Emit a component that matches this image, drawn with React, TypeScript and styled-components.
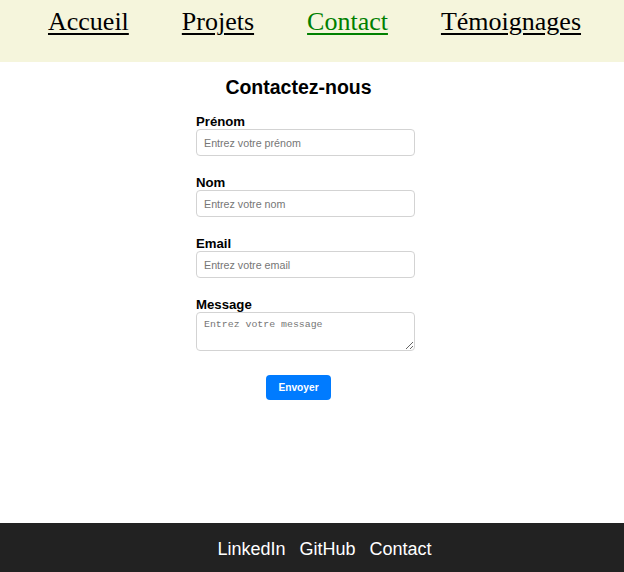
import React from "react";
import styled, { createGlobalStyle } from "styled-components";

const GlobalStyle = createGlobalStyle`
  html, body { margin: 0; padding: 0; }
  body { font-family: "Liberation Sans", Arial, sans-serif; background: #ffffff; color: #000; }
  * { box-sizing: border-box; }
`;

const Page = styled.div`
  min-height: 100vh;
  display: flex;
  flex-direction: column;
`;

const Header = styled.header`
  background: #f5f5dc;
  height: 62px;
  padding: 7px 0 0 5px;
`;

const NavList = styled.ul`
  list-style: none;
  margin: 0;
  padding: 0;
  display: flex;
  justify-content: center;
  gap: 53px;
`;

const NavLink = styled.a<{ $active?: boolean }>`
  font-family: "Liberation Serif", "Times New Roman", serif;
  font-size: 26px;
  line-height: 30px;
  color: ${(p) => (p.$active ? "#008000" : "#000000")};
  text-decoration: underline;
  text-decoration-thickness: 2px;
  text-underline-offset: 3px;
`;

const Main = styled.main`
  flex: 1;
  display: flex;
  flex-direction: column;
  align-items: center;
  padding-right: 27px;
`;

const Form = styled.form`
  width: 205px;
  display: flex;
  flex-direction: column;
`;

const Title = styled.h2`
  margin: 14px 0 16px;
  font-size: 19.5px;
  line-height: 22px;
  font-weight: bold;
  text-align: center;
`;

const Field = styled.div`
  display: flex;
  flex-direction: column;
  margin-bottom: 19px;
`;

const Label = styled.label`
  font-size: 13.2px;
  line-height: 15px;
  font-weight: bold;
`;

const Input = styled.input`
  width: 219px;
  height: 27px;
  padding: 0 7px;
  border: 1px solid #d3d3d3;
  border-radius: 4px;
  font-family: "Liberation Sans", Arial, sans-serif;
  font-size: 10.7px;
  color: #000;
  &::placeholder { color: #767676; }
`;

const TextArea = styled.textarea`
  width: 219px;
  height: 39px;
  padding: 6px 7px;
  border: 1px solid #d3d3d3;
  border-radius: 4px;
  font-family: "Liberation Mono", "Courier New", monospace;
  font-size: 9.9px;
  line-height: 12px;
  &::placeholder { color: #767676; }
`;

const Button = styled.button`
  align-self: center;
  margin-top: 5px;
  width: 65px;
  height: 25px;
  border: none;
  border-radius: 4px;
  background: #007bff;
  color: #ffffff;
  font-family: "Liberation Sans", Arial, sans-serif;
  font-size: 10.2px;
  font-weight: bold;
  cursor: pointer;
`;

const Footer = styled.footer`
  background: #222222;
  height: 49px;
  display: flex;
  align-items: center;
  justify-content: center;
  gap: 14px;
  padding: 3px 0 0 25px;
`;

const FooterLink = styled.a`
  color: #ffffff;
  font-size: 18px;
  line-height: 21px;
  text-decoration: none;
`;

export default function App() {
  const fields = [
    { id: "prenom", label: "Prénom", placeholder: "Entrez votre prénom", type: "text" },
    { id: "nom", label: "Nom", placeholder: "Entrez votre nom", type: "text" },
    { id: "email", label: "Email", placeholder: "Entrez votre email", type: "email" },
  ];
  return (
    <Page>
      <GlobalStyle />
      <Header>
        <nav>
          <NavList>
            <li><NavLink href="#">Accueil</NavLink></li>
            <li><NavLink href="#">Projets</NavLink></li>
            <li><NavLink href="#" $active>Contact</NavLink></li>
            <li><NavLink href="#">Témoignages</NavLink></li>
          </NavList>
        </nav>
      </Header>
      <Main>
        <Form onSubmit={(e) => e.preventDefault()}>
          <Title>Contactez-nous</Title>
          {fields.map((f) => (
            <Field key={f.id}>
              <Label htmlFor={f.id}>{f.label}</Label>
              <Input id={f.id} type={f.type} placeholder={f.placeholder} />
            </Field>
          ))}
          <Field>
            <Label htmlFor="message">Message</Label>
            <TextArea id="message" placeholder="Entrez votre message" />
          </Field>
          <Button type="submit">Envoyer</Button>
        </Form>
      </Main>
      <Footer>
        <FooterLink href="#">LinkedIn</FooterLink>
        <FooterLink href="#">GitHub</FooterLink>
        <FooterLink href="#">Contact</FooterLink>
      </Footer>
    </Page>
  );
}
